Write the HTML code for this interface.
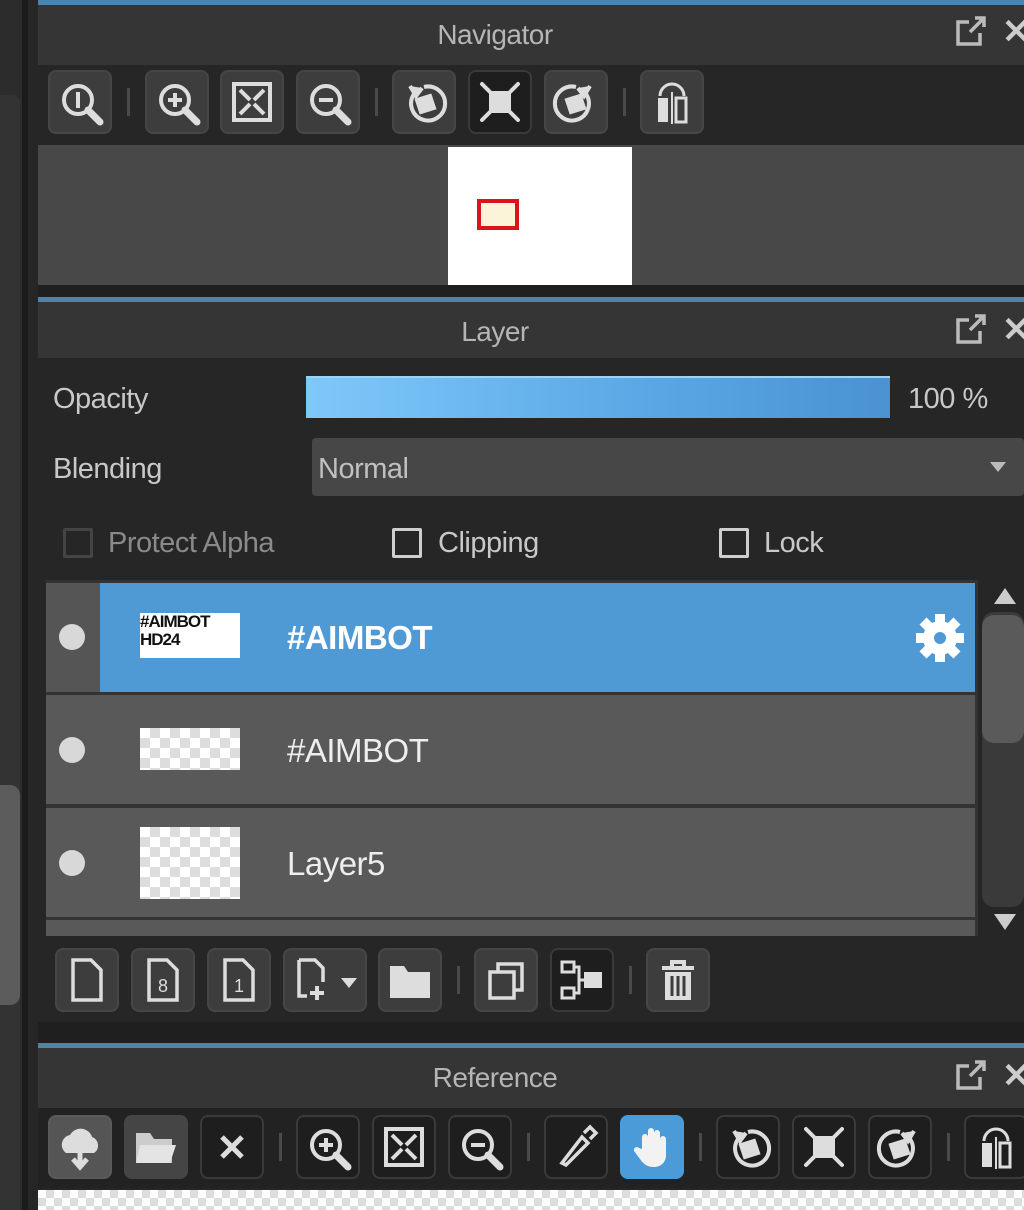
<!DOCTYPE html>
<html><head><meta charset="utf-8"><style>
*{margin:0;padding:0;box-sizing:border-box}
body{width:1024px;height:1210px;background:#262626;position:relative;overflow:hidden;font-family:"Liberation Sans",sans-serif}
.a{position:absolute}
.title{position:absolute;left:38px;background:#353535;color:#b5b5b5;font-size:28px;text-align:center;letter-spacing:-0.5px}
.tb{position:absolute;left:38px;right:0;background:#353535}
.bar{position:absolute;left:38px;right:0;height:5px;background:#4d84ad}
.btn{position:absolute;width:64px;height:64px;border-radius:8px;background:#3d3d3d;border:2px solid #464646}
.btn svg{position:absolute;left:6px;top:6px;width:48px;height:48px}
.dk{background:#1e1e1e;border-color:#3a3a3a}
.sep{position:absolute;width:3px;height:28px;background:#4a4a4a}
.lbl{position:absolute;color:#c8c8c8;font-size:29px;letter-spacing:-0.5px}
.cb{position:absolute;width:30px;height:30px;border:3px solid #cfcfcf;border-radius:2px}
.row{position:absolute;left:46px;width:929px;height:109px;background:#595959}
.eye{position:absolute;left:13px;width:26px;height:26px;border-radius:50%;background:#d8d8d8}
.th{position:absolute;left:94px;width:100px;background:#fff;background-image:linear-gradient(45deg,#ddd 25%,transparent 25%,transparent 75%,#ddd 75%),linear-gradient(45deg,#ddd 25%,transparent 25%,transparent 75%,#ddd 75%);background-size:20px 20px;background-position:0 0,10px 10px}
.rt{position:absolute;left:241px;color:#eee;font-size:33px;letter-spacing:-0.5px}
.pop{position:absolute;left:953px;width:34px;height:34px}
</style></head><body>
<div class="a" style="left:0;top:0;width:22px;height:1210px;background:#2c2c2c"></div>
<div class="a" style="left:0;top:95px;width:20px;height:1115px;background:#333;border-radius:0 8px 0 0"></div>
<div class="a" style="left:0;top:785px;width:20px;height:220px;background:#5c5c5c;border-radius:0 10px 10px 0"></div>
<div class="a" style="left:22px;top:0;width:6px;height:1210px;background:#1b1b1b"></div>
<div class="a" style="left:28px;top:0;width:10px;height:1210px;background:#262626"></div>

<svg width="0" height="0" style="position:absolute"><defs>
<g id="mag" fill="none" stroke="#ddd" stroke-width="4"><circle cx="22" cy="22" r="14"/><path d="M32 32 L44 44" stroke-width="7" stroke-linecap="round"/></g>
<g id="rotl" fill="none" stroke="#ddd" stroke-width="4"><path d="M14 16 A17 17 0 1 0 24 9"/><path d="M10 8 L16 18 L22 10" fill="#ddd"/><path d="M17 22 L30 18 L34 30 L21 34Z" fill="#ddd"/></g>
<g id="rotr" fill="none" stroke="#ddd" stroke-width="4"><path d="M34 16 A17 17 0 1 1 24 9"/><path d="M38 8 L32 18 L26 10" fill="#ddd"/><path d="M15 22 L28 18 L32 30 L19 34Z" fill="#ddd"/></g>
<g id="fit" fill="#ddd" stroke="#ddd" stroke-width="4"><rect x="13" y="13" width="22" height="22" stroke="none"/><path d="M6 6 L14 14 M42 6 L34 14 M6 42 L14 34 M42 42 L34 34" stroke-linecap="round"/></g>
<g id="flip" fill="#ddd"><path d="M10 20 L10 44 L20 44 L20 20Z"/><path d="M28 20 h10 v24 h-10Z" fill="none" stroke="#ddd" stroke-width="3"/><path d="M12 18 A12 12 0 0 1 36 18" fill="none" stroke="#ddd" stroke-width="3"/><rect x="23" y="14" width="2" height="32"/></g>
<g id="zi"><use href="#mag"/><path d="M15 22h14M22 15v14" stroke="#ddd" stroke-width="4"/></g>
<g id="zo"><use href="#mag"/><path d="M15 22h14" stroke="#ddd" stroke-width="4"/></g>
<g id="z1"><use href="#mag"/><path d="M22 14v16" stroke="#ddd" stroke-width="4"/></g>
<g id="fs" fill="none" stroke="#ddd" stroke-width="4"><rect x="6" y="6" width="36" height="36"/><path d="M12 12l10 10M36 12l-10 10M12 36l10-10M36 36l-10-10"/></g>
<g id="page" fill="none" stroke="#ddd" stroke-width="3.5"><path d="M10 4 H28 L38 14 V44 H10Z"/></g>
<g id="popi" fill="none" stroke="#bbb" stroke-width="3.5"><path d="M16 8H5V30H27V19"/><path d="M17 18L30 5M22 4H31V13" /></g>
</defs></svg>

<!-- Navigator -->
<div class="bar" style="top:0"></div>
<div class="tb" style="top:5px;height:60px"></div>
<div class="title" style="top:5px;height:60px;line-height:60px;width:914px">Navigator</div>
<svg class="pop" style="top:14px" viewBox="0 0 34 34"><use href="#popi"/></svg>
<div class="a" style="left:1002px;top:12px;color:#ccc;font-size:34px;font-weight:bold">✕</div>
<div class="a" style="left:38px;top:65px;right:0;height:80px;background:#262626"></div>
<div class="btn" style="left:48px;top:70px"><svg viewBox="0 0 48 48"><use href="#z1"/></svg></div>
<div class="sep" style="left:127px;top:88px"></div>
<div class="btn" style="left:145px;top:70px"><svg viewBox="0 0 48 48"><use href="#zi"/></svg></div>
<div class="btn" style="left:220px;top:70px"><svg viewBox="0 0 48 48"><use href="#fs"/></svg></div>
<div class="btn" style="left:296px;top:70px"><svg viewBox="0 0 48 48"><use href="#zo"/></svg></div>
<div class="sep" style="left:375px;top:88px"></div>
<div class="btn" style="left:392px;top:70px"><svg viewBox="0 0 48 48"><use href="#rotl"/></svg></div>
<div class="btn dk" style="left:468px;top:70px"><svg viewBox="0 0 48 48"><use href="#fit"/></svg></div>
<div class="btn" style="left:544px;top:70px"><svg viewBox="0 0 48 48"><use href="#rotr"/></svg></div>
<div class="sep" style="left:623px;top:88px"></div>
<div class="btn" style="left:640px;top:70px"><svg viewBox="0 0 48 48"><use href="#flip"/></svg></div>
<div class="a" style="left:38px;top:145px;right:0;height:140px;background:#484848"></div>
<div class="a" style="left:448px;top:147px;width:184px;height:138px;background:#fff"></div>
<div class="a" style="left:477px;top:199px;width:42px;height:31px;border:4px solid #d9141c;background:#fbf4d8"></div>
<div class="a" style="left:38px;top:285px;right:0;height:13px;background:#1f1f1f"></div>

<!-- Layer -->
<div class="bar" style="top:297px;height:5px"></div>
<div class="tb" style="top:302px;height:56px"></div>
<div class="title" style="top:302px;height:56px;line-height:60px;width:914px">Layer</div>
<svg class="pop" style="top:312px" viewBox="0 0 34 34"><use href="#popi"/></svg>
<div class="a" style="left:1002px;top:310px;color:#ccc;font-size:34px;font-weight:bold">✕</div>
<div class="lbl" style="left:53px;top:383px">Opacity</div>
<div class="a" style="left:306px;top:376px;width:584px;height:42px;background:linear-gradient(90deg,#7ec8fa,#5aa6e4 60%,#4a92d2);border-top:2px solid #9cd3f5"></div>
<div class="lbl" style="left:908px;top:383px">100 %</div>
<div class="lbl" style="left:53px;top:453px">Blending</div>
<div class="a" style="left:312px;top:438px;width:712px;height:58px;background:#474747;border-radius:4px"></div>
<div class="lbl" style="left:318px;top:453px;color:#c0c0c0">Normal</div>
<div class="a" style="left:990px;top:462px;width:0;height:0;border-left:8px solid transparent;border-right:8px solid transparent;border-top:10px solid #bbb"></div>
<div class="cb" style="left:63px;top:528px;border-color:#444"></div>
<div class="lbl" style="left:108px;top:527px;color:#8a8a8a">Protect Alpha</div>
<div class="cb" style="left:392px;top:528px"></div>
<div class="lbl" style="left:438px;top:527px">Clipping</div>
<div class="cb" style="left:719px;top:528px"></div>
<div class="lbl" style="left:764px;top:527px">Lock</div>

<div class="a" style="left:46px;top:580px;width:932px;height:356px;background:#333"></div>
<div class="row" style="top:583px;background:#555"></div>
<div class="a" style="left:100px;top:583px;width:875px;height:109px;background:#4f9ad4"></div>
<div class="eye" style="left:59px;top:624px"></div>
<div class="th" style="left:140px;top:613px;height:45px;background:#fff;overflow:hidden;color:#111;font-size:17px;line-height:18px;font-weight:bold;letter-spacing:-1px">#AIMBOT<br>HD24</div>
<div class="rt" style="left:287px;top:619px;font-weight:bold;color:#fff">#AIMBOT</div>
<svg class="a" style="left:912px;top:610px" width="56" height="56" viewBox="0 0 56 56"><g fill="#fff"><circle cx="28" cy="28" r="17"/><g id="t"><rect x="23" y="4" width="10" height="48"/></g><rect x="23" y="4" width="10" height="48" transform="rotate(45 28 28)"/><rect x="23" y="4" width="10" height="48" transform="rotate(90 28 28)"/><rect x="23" y="4" width="10" height="48" transform="rotate(135 28 28)"/></g><circle cx="28" cy="28" r="6" fill="#4f9ad4"/></svg>
<div class="row" style="top:695px"></div>
<div class="eye" style="left:59px;top:737px"></div>
<div class="th" style="left:140px;top:728px;height:42px"></div>
<div class="rt" style="left:287px;top:732px">#AIMBOT</div>
<div class="row" style="top:808px"></div>
<div class="eye" style="left:59px;top:850px"></div>
<div class="th" style="left:140px;top:827px;height:72px"></div>
<div class="rt" style="left:287px;top:845px">Layer5</div>
<div class="row" style="top:920px;height:16px"></div>
<div class="a" style="left:978px;top:580px;width:46px;height:356px;background:#262626"></div>
<div class="a" style="left:982px;top:612px;width:42px;height:295px;background:#3a3a3a;border-radius:12px"></div>
<div class="a" style="left:982px;top:615px;width:42px;height:128px;background:#5a5a5a;border-radius:12px"></div>
<div class="a" style="left:994px;top:588px;border-left:11px solid transparent;border-right:11px solid transparent;border-bottom:16px solid #ccc"></div>
<div class="a" style="left:994px;top:914px;border-left:11px solid transparent;border-right:11px solid transparent;border-top:16px solid #ccc"></div>

<div class="a" style="left:46px;top:936px;right:0;height:86px;background:#262626"></div>
<div class="btn" style="left:55px;top:948px"><svg viewBox="0 0 48 48"><use href="#page"/></svg></div>
<div class="btn" style="left:131px;top:948px"><svg viewBox="0 0 48 48"><use href="#page"/><text x="24" y="36" font-size="18" fill="#ddd" text-anchor="middle" font-family="Liberation Sans">8</text></svg></div>
<div class="btn" style="left:207px;top:948px"><svg viewBox="0 0 48 48"><use href="#page"/><text x="24" y="36" font-size="18" fill="#ddd" text-anchor="middle" font-family="Liberation Sans">1</text></svg></div>
<div class="btn" style="left:283px;top:948px;width:84px"><svg viewBox="0 0 48 48"><path d="M8 4H24L32 12V26M8 4V40H16" fill="none" stroke="#ddd" stroke-width="3.5"/><path d="M26 30v14M19 37h14" stroke="#ddd" stroke-width="4"/></svg><div class="a" style="left:56px;top:28px;border-left:8px solid transparent;border-right:8px solid transparent;border-top:10px solid #ddd"></div></div>
<div class="btn" style="left:378px;top:948px"><svg viewBox="0 0 48 48"><path d="M4 10H18L22 16H44V42H4Z" fill="#ddd"/></svg></div>
<div class="sep" style="left:457px;top:966px"></div>
<div class="btn" style="left:474px;top:948px"><svg viewBox="0 0 48 48"><rect x="8" y="16" width="24" height="26" fill="none" stroke="#ddd" stroke-width="3.5"/><path d="M16 16V8H40V34H32" fill="none" stroke="#ddd" stroke-width="3.5"/></svg></div>
<div class="btn dk" style="left:550px;top:948px"><svg viewBox="0 0 48 48"><rect x="4" y="6" width="12" height="10" fill="none" stroke="#ddd" stroke-width="3"/><rect x="4" y="32" width="12" height="10" fill="none" stroke="#ddd" stroke-width="3"/><rect x="26" y="16" width="18" height="16" fill="#ddd"/><path d="M16 11H21V37H16M21 24H26" fill="none" stroke="#ddd" stroke-width="3"/></svg></div>
<div class="sep" style="left:629px;top:966px"></div>
<div class="btn" style="left:646px;top:948px"><svg viewBox="0 0 48 48"><path d="M8 12H40M18 12V6H30V12" fill="none" stroke="#ddd" stroke-width="4"/><path d="M11 16H37V44H11Z" fill="#ddd"/><path d="M18 20V40M24 20V40M30 20V40" stroke="#3d3d3d" stroke-width="3"/></svg></div>
<div class="a" style="left:38px;top:1022px;right:0;height:23px;background:#1f1f1f"></div>

<!-- Reference -->
<div class="bar" style="top:1043px;height:5px"></div>
<div class="tb" style="top:1048px;height:60px"></div>
<div class="title" style="top:1048px;height:60px;line-height:60px;width:914px">Reference</div>
<svg class="pop" style="top:1058px" viewBox="0 0 34 34"><use href="#popi"/></svg>
<div class="a" style="left:1002px;top:1056px;color:#ccc;font-size:34px;font-weight:bold">✕</div>
<div class="a" style="left:38px;top:1108px;right:0;height:80px;background:#222"></div>
<div class="btn" style="left:48px;top:1115px;background:#555;border-color:#5a5a5a"><svg viewBox="0 0 48 48"><path d="M10 30A10 10 0 0 1 14 12A12 12 0 0 1 36 14A9 9 0 0 1 38 30Z" fill="#ddd"/><path d="M24 24V44M17 36L24 44L31 36" fill="none" stroke="#ddd" stroke-width="5"/></svg></div>
<div class="btn" style="left:124px;top:1115px;background:#454545"><svg viewBox="0 0 48 48"><path d="M4 10H18L22 16H40V40H4Z" fill="#ccc"/><path d="M8 22H44L38 40H4Z" fill="#e4e4e4"/></svg></div>
<div class="btn dk" style="left:200px;top:1115px"><svg viewBox="0 0 48 48"><path d="M14 14L34 34M34 14L14 34" stroke="#ddd" stroke-width="5"/></svg></div>
<div class="sep" style="left:279px;top:1133px"></div>
<div class="btn dk" style="left:296px;top:1115px"><svg viewBox="0 0 48 48"><use href="#zi"/></svg></div>
<div class="btn dk" style="left:372px;top:1115px"><svg viewBox="0 0 48 48"><use href="#fs"/></svg></div>
<div class="btn dk" style="left:448px;top:1115px"><svg viewBox="0 0 48 48"><use href="#zo"/></svg></div>
<div class="sep" style="left:527px;top:1133px"></div>
<div class="btn dk" style="left:544px;top:1115px"><svg viewBox="0 0 48 48"><path d="M10 40L30 14L36 20L14 42Z M32 10L38 4L44 10L38 16" fill="none" stroke="#ddd" stroke-width="3.5"/></svg></div>
<div class="btn" style="left:620px;top:1115px;background:#4b9bd8;border-color:#4b9bd8"><svg viewBox="0 0 48 48"><path d="M14 26V14a3 3 0 0 1 6 0V24V8a3 3 0 0 1 6 0V24V10a3 3 0 0 1 6 0V26V16a3 3 0 0 1 6 0V32C38 40 32 44 26 44C20 44 16 42 12 36L6 28a3 3 0 0 1 5-3Z" fill="#f2f2f2"/></svg></div>
<div class="sep" style="left:699px;top:1133px"></div>
<div class="btn dk" style="left:716px;top:1115px"><svg viewBox="0 0 48 48"><use href="#rotl"/></svg></div>
<div class="btn dk" style="left:792px;top:1115px"><svg viewBox="0 0 48 48"><use href="#fit"/></svg></div>
<div class="btn dk" style="left:868px;top:1115px"><svg viewBox="0 0 48 48"><use href="#rotr"/></svg></div>
<div class="sep" style="left:947px;top:1133px"></div>
<div class="btn dk" style="left:964px;top:1115px"><svg viewBox="0 0 48 48"><use href="#flip"/></svg></div>
<div class="a" style="left:38px;top:1190px;right:0;height:20px;background:#fff;background-image:linear-gradient(45deg,#ddd 25%,transparent 25%,transparent 75%,#ddd 75%),linear-gradient(45deg,#ddd 25%,transparent 25%,transparent 75%,#ddd 75%);background-size:16px 16px;background-position:0 0,8px 8px"></div>
</body></html>
